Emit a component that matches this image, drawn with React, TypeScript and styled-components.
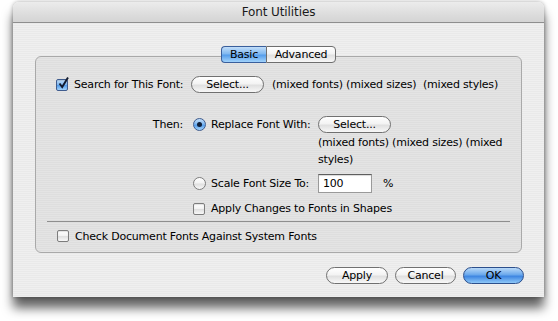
import styled, { createGlobalStyle, css } from "styled-components";

const GlobalStyle = createGlobalStyle`
  html, body {
    margin: 0;
    padding: 0;
    background: #ffffff;
  }
  body {
    font-family: "DejaVu Sans", "Liberation Sans", sans-serif;
    font-size: 11px;
    letter-spacing: -0.2px;
    color: #000000;
  }
`;

const stripes = (a: string, b: string) =>
  `repeating-linear-gradient(180deg, ${a} 0 1px, ${b} 1px 2px)`;

const aquaWhite = "linear-gradient(180deg, #ffffff 0%, #f3f3f3 45%, #e0e0e0 55%, #f8f8f8 100%)";
const aquaBlue = "linear-gradient(180deg, #c2def9 0%, #80b8f0 46%, #559deb 54%, #a2d3fb 100%)";

const Page = styled.div`
  width: 558px;
  height: 321px;
  padding: 2px 0 0 13px;
  box-sizing: border-box;
`;

const Window = styled.div`
  display: flex;
  flex-direction: column;
  width: 531px;
  height: 295px;
  border-radius: 6px 6px 0 0;
  background: ${stripes("#efefef", "#e9e9e9")};
  box-shadow:
    0 11px 11px rgba(0, 0, 0, 0.62),
    0 0 4px rgba(0, 0, 0, 0.35);
`;

const TitleBar = styled.div`
  display: flex;
  align-items: center;
  justify-content: center;
  height: 20px;
  border-bottom: 1px solid #8e8e8e;
  border-radius: 6px 6px 0 0;
  background: linear-gradient(180deg, #ececec 0%, #dddddd 60%, #d4d4d4 100%);
  font-size: 12px;
  letter-spacing: -0.1px;
  color: #1a1a1a;
`;

const Body = styled.div`
  display: flex;
  flex-direction: column;
  padding: 23px 22px 0;
`;

const TabRow = styled.div`
  position: relative;
  z-index: 1;
  display: flex;
  justify-content: center;
  height: 17px;
`;

const Tab = styled.div<{ $selected?: boolean; $first?: boolean; $width: number }>`
  display: flex;
  align-items: center;
  justify-content: center;
  width: ${({ $width }) => $width}px;
  height: 17px;
  box-sizing: border-box;
  border: 1px solid #6e6e6e;
  background: ${aquaWhite};
  ${({ $first }) =>
    $first
      ? css`
          border-radius: 4px 0 0 4px;
          border-right: none;
        `
      : css`
          border-radius: 0 4px 4px 0;
        `}
  ${({ $selected }) =>
    $selected &&
    css`
      border-color: #3a5f9c;
      background: ${aquaBlue};
    `}
`;

const Panel = styled.div`
  display: flex;
  flex-direction: column;
  height: 197px;
  box-sizing: border-box;
  margin-top: -7px;
  padding: 19px 0 0 20px;
  border: 1px solid #a9a9a9;
  border-radius: 6px;
  background: ${stripes("#e4e4e4", "#dedede")};
`;

const MainGrid = styled.div`
  display: grid;
  grid-template-columns: 135px 1fr;
  row-gap: 23px;
`;

const Cell = styled.div`
  display: flex;
  align-items: center;
  gap: 6px;
  height: 17px;
  white-space: nowrap;
`;

const RightLabel = styled.div`
  display: flex;
  align-items: center;
  justify-content: flex-end;
  padding-right: 8px;
  height: 17px;
`;

const ControlCell = styled(Cell)`
  gap: 8px;
`;

const OptionsGrid = styled.div`
  display: grid;
  grid-template-columns: 18px 107px 1fr;
  padding-left: 2px;
  align-items: center;
`;

const GridItem = styled.div<{ $top?: number; $span?: string }>`
  display: flex;
  align-items: center;
  grid-column: ${({ $span }) => $span ?? "auto"};
  margin-top: ${({ $top }) => $top ?? 0}px;
  white-space: nowrap;
`;

const MixedText = styled.div`
  grid-column: 3 / -1;
  width: 200px;
  line-height: 17px;
  margin-top: 1px;
`;

const Checkbox = styled.span<{ $checked?: boolean }>`
  display: inline-flex;
  align-items: center;
  justify-content: center;
  flex: none;
  width: 12px;
  height: 12px;
  box-sizing: border-box;
  border: 1px solid #7d7d7d;
  border-radius: 2px;
  background: ${aquaWhite};
  box-shadow: inset 0 1px 1px rgba(0, 0, 0, 0.12);
  ${({ $checked }) =>
    $checked &&
    css`
      border-color: #3f5c8e;
      background: ${aquaBlue};
    `}
`;

const Radio = styled.span<{ $checked?: boolean }>`
  display: inline-flex;
  align-items: center;
  justify-content: center;
  flex: none;
  width: 13px;
  height: 13px;
  box-sizing: border-box;
  border: 1px solid #7d7d7d;
  border-radius: 50%;
  background: ${aquaWhite};
  ${({ $checked }) =>
    $checked &&
    css`
      border-color: #3f5c8e;
      background: ${aquaBlue};
      &::after {
        content: "";
        width: 5px;
        height: 5px;
        border-radius: 50%;
        background: #10203a;
      }
    `}
`;

const PillButton = styled.button<{ $width: number; $default?: boolean }>`
  display: inline-flex;
  align-items: center;
  justify-content: center;
  flex: none;
  width: ${({ $width }) => $width}px;
  height: 17px;
  padding: 0;
  border: 1px solid #707070;
  border-radius: 9px;
  background: ${aquaWhite};
  font-family: inherit;
  font-size: 11px;
  letter-spacing: -0.2px;
  color: #000000;
  ${({ $default }) =>
    $default &&
    css`
      border-color: #2c4f8c;
      background: linear-gradient(180deg, #b9d9f8 0%, #6aa8ec 45%, #3e86e2 55%, #8ec8f8 100%);
    `}
`;

const TextField = styled.div`
  display: flex;
  align-items: center;
  width: 54px;
  height: 19px;
  box-sizing: border-box;
  padding-left: 4px;
  border: 1px solid #9a9a9a;
  border-top-color: #5e5e5e;
  background: #ffffff;
  box-shadow: inset 0 1px 1px rgba(0, 0, 0, 0.15);
`;

const FieldRow = styled.div`
  display: flex;
  align-items: center;
  gap: 11px;
`;

const Separator = styled.div`
  height: 1px;
  margin: 4px 11px 0 -9px;
  background: #8f8f8f;
`;

const BottomRow = styled(Cell)`
  margin-top: 6px;
  height: 16px;
  padding-left: 1px;
`;

const ButtonRow = styled.div`
  display: flex;
  justify-content: flex-end;
  gap: 7px;
  margin: 14px -2px 0 0;
`;

function CheckMark() {
  return (
    <svg width="11" height="12" viewBox="0 0 11 12" style={{ marginTop: -4, marginLeft: 2, overflow: "visible" }}>
      <path d="M1.5 6.5 L4.2 10 L10 0.5" fill="none" stroke="#111a2e" strokeWidth="1.9" />
    </svg>
  );
}

export default function App() {
  return (
    <Page>
      <GlobalStyle />
      <Window>
        <TitleBar>Font Utilities</TitleBar>
        <Body>
          <TabRow>
            <Tab $first $selected $width={45}>
              Basic
            </Tab>
            <Tab $width={70}>Advanced</Tab>
          </TabRow>
          <Panel>
            <MainGrid>
              <Cell>
                <Checkbox $checked>
                  <CheckMark />
                </Checkbox>
                Search for This Font:
              </Cell>
              <ControlCell>
                <PillButton $width={73}>Select...</PillButton>
                (mixed fonts) (mixed sizes)&nbsp; (mixed styles)
              </ControlCell>
              <RightLabel>Then:</RightLabel>
              <OptionsGrid>
                <GridItem>
                  <Radio $checked />
                </GridItem>
                <GridItem>Replace Font With:</GridItem>
                <GridItem>
                  <PillButton $width={73}>Select...</PillButton>
                </GridItem>
                <MixedText>(mixed fonts) (mixed sizes) (mixed styles)</MixedText>
                <GridItem $top={6}>
                  <Radio />
                </GridItem>
                <GridItem $top={6}>Scale Font Size To:</GridItem>
                <GridItem $top={6}>
                  <FieldRow>
                    <TextField>100</TextField>%
                  </FieldRow>
                </GridItem>
                <GridItem $top={7} $span="1 / -1">
                  <Cell>
                    <Checkbox />
                    Apply Changes to Fonts in Shapes
                  </Cell>
                </GridItem>
              </OptionsGrid>
            </MainGrid>
            <Separator />
            <BottomRow>
              <Checkbox />
              Check Document Fonts Against System Fonts
            </BottomRow>
          </Panel>
          <ButtonRow>
            <PillButton $width={62}>Apply</PillButton>
            <PillButton $width={61}>Cancel</PillButton>
            <PillButton $width={61} $default>
              OK
            </PillButton>
          </ButtonRow>
        </Body>
      </Window>
    </Page>
  );
}
